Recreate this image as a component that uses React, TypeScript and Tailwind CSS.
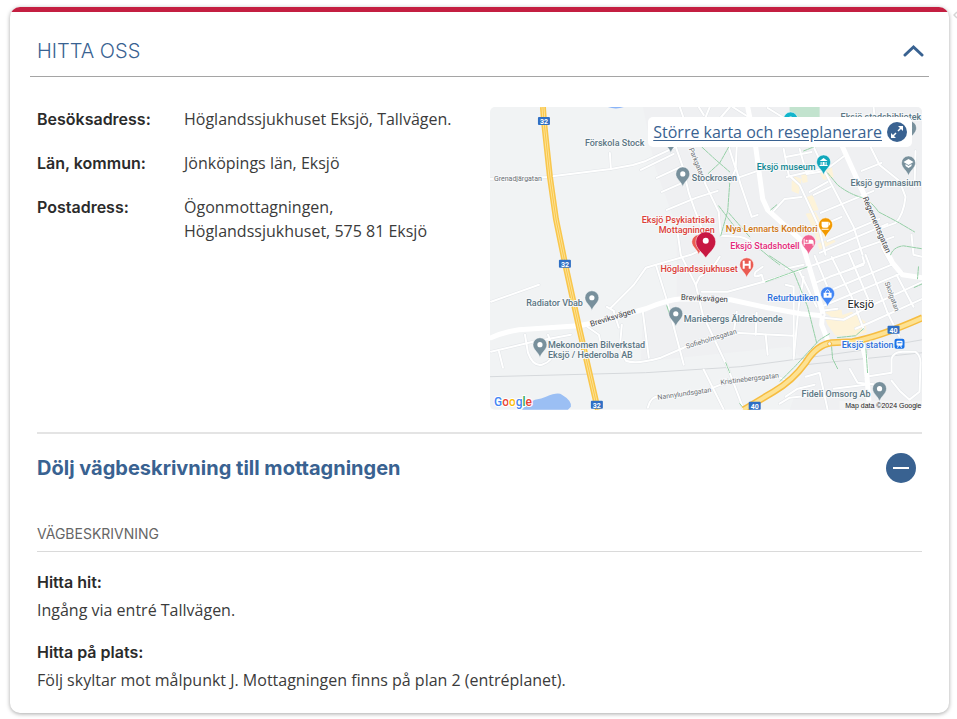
import { useState } from 'react';

type Point = [number, number];

const address = [
  { label: 'Besöksadress:', lines: ['Höglandssjukhuset Eksjö, Tallvägen.'] },
  { label: 'Län, kommun:', lines: ['Jönköpings län, Eksjö'] },
  { label: 'Postadress:', lines: ['Ögonmottagningen,', 'Höglandssjukhuset, 575 81 Eksjö'] },
];

const directions = [
  { title: 'Hitta hit:', text: 'Ingång via entré Tallvägen.' },
  {
    title: 'Hitta på plats:',
    text: 'Följ skyltar mot målpunkt J. Mottagningen finns på plan 2 (entréplanet).',
  },
];

const minorRoads = [
  'M0 72 L56 70 L121 62 L143 58 L156 54 L184 41 L196 30',
  'M120 46 L121 62',
  'M1 195 L49 178',
  'M1 245 L43 235 L81 228',
  'M9 245 L13 261',
  'M35 228 L38 246 Q43 260 52 258 Q63 255 64 243 L58 228',
  'M96 219 L109 228 L112 241',
  'M117 200 L124 204 M121 201 L144 178 L156 161 L166 158 L201 148 L214 142',
  'M124 205 L129 221 M132 218 L130 240 L136 254 Q146 258 171 251 L194 241 Q212 231 244 226 L304 229',
  'M153 205 L159 251',
  'M166 158 L176 190 L194 258',
  'M187 120 L191 148 L206 178 L213 208 L238 261 L254 303',
  'M206 178 L210 170 Q222 164 230 150 M212 185 L238 185 L274 175 L312 163',
  'M274 175 L272 168 Q262 172 266 165 L273 160',
  'M247 205 L244 226 M267 206 L266 228 M276 228 L278 248 M314 170 L309 200 L304 252',
  'M158 301 Q161 289 170 290 L211 286 L231 278 L260 272 L288 270 L297 274',
  'M214 263 L234 303',
  'M186 40 L193 60 L199 86 L205 103 L214 126',
  'M190 0 L199 26 L202 40 L216 78 L229 105 L231 129 L250 130 Q260 132 270 142',
  'M167 71 L191 60 M172 85 L195 75 M177 103 L206 91 L228 84 M151 63 L184 47',
  'M240 0 L228 14 L205 35 M243 0 L262 12 M209 0 L214 8',
  'M247 40 L246 60 L251 78 L262 110 L268 108',
  'M239 74 L268 64 M239 40 L246 62 L240 76 M220 0 L216 10 M278 1 L296 12',
  'M294 42 L299 68 L310 78 L329 119 L336 148',
  'M310 42 L317 67 L335 64 M324 40 L336 66 L364 120 L373 148',
  'M296 50 L322 45 M297 62 L318 58 M297 70 L340 60 L356 48',
  'M284 104 L295 92 L312 90 M320 85 L338 75 M324 88 L341 80',
  'M331 106 L384 84 M336 117 L352 110 M338 134 L390 112 M330 146 L398 117',
  'M319 160 L404 130 M326 176 L340 170 L374 158 M330 188 L404 157 M334 199 L413 166',
  'M309 163 L327 200 M325 149 L342 190 M342 150 L362 190 L374 222 M359 146 L382 200',
  'M376 148 L398 206 M392 140 L402 158 M359 163 L375 156 L373 150',
  'M296 178 L304 180 L304 249 M296 162 L314 158',
  'M334 211 L354 213 L377 201 L433 175 M332 204 L348 202',
  'M366 222 L380 216 L433 192 M407 168 L424 200 M398 206 L410 230',
  'M372 64 L392 56 M380 38 L390 58 L410 74 L416 90 Q414 108 406 116 L390 122',
  'M384 0 L388 38 M426 44 L425 80 M422 128 L424 148 L433 150',
  'M376 238 L380 303 M376 270 L402 266 L402 252 Q404 245 413 245 L426 245 Q431 249 431 256 L430 285 L420 293 L410 284 L402 274',
  'M316 270 L330 266 L338 303 M296 290 L308 282 L325 278 M290 297 L300 291 L319 289 M360 262 L368 276 L390 278 M344 282 L376 278',
];

const mainRoads = [
  'M1 231 Q15 225 29 223 L89 219 L109 215 L156 202 Q177 193 192 192 L241 193 L278 201 L311 207 L333 209',
  'M258 0 L266 40 L273 92 L278 103 L311 133 L316 148 L333 205 L332 218 L339 236',
  'M353 40 L376 91 L398 146 L403 156 L413 168 L433 171 M353 40 L344 20',
  'M372 235 L376 252 L380 303',
];

const greenPaths = [
  'M212 40 L225 52 L240 65 M239 40 L230 56 L218 67 M240 76 L238 104 L231 129 M229 99 L245 120 M239 106 L260 130',
  'M338 66 L348 78 Q358 86 370 90 Q380 92 389 105 L408 115 L425 125',
  'M401 148 Q404 140 414 139 L433 142',
  'M280 149 L304 165 L318 200 L327 236 M276 175 L304 165 L318 160 M177 199 L180 208 M236 256 L240 266 M250 297 L255 303',
  'M270 142 L282 152 L290 158 M314 44 L324 40 M281 103 L287 98',
  'M429 160 L428 172 M433 177 L424 181 M374 222 L366 229 L347 231 M376 237 L378 266 M342 240 L343 252 L348 262',
  'M340 227 L330 233 L306 259 L290 275',
];

const highway32 = 'M53 0 L54 14 L60 70 L66 112 L75 156 L89 220 L108 303';
const highway40 = 'M254 303 L284 285 Q303 274 316 256 Q327 238 342 236 L363 235 Q390 230 433 211';

// Labels standing left of their pin are anchored at the pin
const poiLabels = [
  { x: 95, y: 39, text: 'Förskola Stock', color: '#5b7683' },
  { x: 202, y: 74, text: 'Stockrosen', color: '#5b7683' },
  { x: 326, y: 63, text: 'Eksjö museum', color: '#0f8793', end: true },
  { x: 351, y: 13, text: 'Eksjö stadsbibliotek', color: '#5b7683' },
  { x: 361, y: 79, text: 'Eksjö gymnasium', color: '#5b7683' },
  { x: 225, y: 116, text: 'Eksjö Psykiatriska', color: '#dc4038', end: true },
  { x: 225, y: 126, text: 'Mottagningen', color: '#dc4038', end: true },
  { x: 328, y: 125, text: 'Nya Lennarts Konditori', color: '#cf7612', end: true },
  { x: 310, y: 142, text: 'Eksjö Stadshotell', color: '#e52a7b', end: true },
  { x: 248, y: 165, text: 'Höglandssjukhuset', color: '#dc4038', end: true },
  { x: 329, y: 194, text: 'Returbutiken', color: '#2d70dc', end: true },
  { x: 93, y: 199, text: 'Radiator Vbab', color: '#5b7683', end: true },
  { x: 194, y: 215, text: 'Mariebergs Äldreboende', color: '#5b7683' },
  { x: 58, y: 241, text: 'Mekonomen Bilverkstad', color: '#5b7683' },
  { x: 58, y: 251, text: 'Eksjö / Hederolba AB', color: '#5b7683' },
  { x: 404, y: 241, text: 'Eksjö station', color: '#2d70dc', end: true },
  { x: 381, y: 290, text: 'Fideli Omsorg Ab', color: '#5b7683', end: true },
];

const streetLabels = [
  { at: 'translate(4 74)', text: 'Grenadjärgatan', size: 7 },
  { at: 'translate(101 220) rotate(-17)', text: 'Breviksvägen', size: 8 },
  { at: 'translate(191 193) rotate(3)', text: 'Breviksvägen', size: 8 },
  { at: 'translate(197 242) rotate(-17)', text: 'Sofieholmsgatan', size: 7 },
  { at: 'translate(231 278) rotate(-7)', text: 'Kristinebergsgatan', size: 7 },
  { at: 'translate(168 293) rotate(-8)', text: 'Nannylundsgatan', size: 7 },
  { at: 'translate(199 42) rotate(68)', text: 'Parkgatan', size: 7 },
  { at: 'translate(373 91) rotate(67)', text: 'Regementsgatan', size: 8 },
  { at: 'translate(395 176) rotate(70)', text: 'Skolgatan', size: 7 },
];

const roadSigns: { at: Point; text: string }[] = [
  { at: [54, 14], text: '32' },
  { at: [75, 157], text: '32' },
  { at: [107, 298], text: '32' },
  { at: [265, 299], text: '40' },
  { at: [404, 223], text: '40' },
];

const greyPins: Point[] = [
  [193, 80],
  [102, 204],
  [50, 251],
  [186, 220],
  [390, 295],
  [419, 69],
  [181, 46],
  [420, 34],
];

function Pin({ at, color, children }: { at: Point; color: string; children?: React.ReactNode }) {
  return (
    <g transform={`translate(${at[0]} ${at[1]})`}>
      <path d="M0 0 C-1 -5 -7 -8 -7 -13 A7 7 0 0 1 7 -13 C7 -8 1 -5 0 0Z" fill={color} stroke="#fff" strokeWidth="0.5" />
      {children ?? <circle cy="-13" r="2.6" fill="#fff" />}
    </g>
  );
}

function TownMap() {
  return (
    <svg viewBox="0 0 433 303" className="block w-full" role="img" aria-label="Karta över Eksjö">
      <rect width="433" height="303" fill="#f1f3f4" />
      <path d="M153 0 H433 V303 H300 L316 256 L300 240 L151 255 L153 205 L187 192 L187 120 L165 60Z" fill="#eff0f2" />

      {/* Water, park and built-up areas */}
      <path d="M32 303 Q38 296 45 293 Q52 292 56 290 Q68 285 72 288 Q82 294 81 300 L78 303Z" fill="#9bbff4" />
      <path d="M118 0 H134 Q126 3 118 0Z" fill="#8ab4f8" />
      <path d="M300 0 H330 V16 H300Z" fill="#c2e3ce" />
      <g fill="#fdf3d9">
        <path d="M336 213 L345 211 L362 205 L376 215 L377 226 L368 229 L346 229 L338 218Z" />
        <path d="M337 200 L340 204 L352 203 L353 209 L344 212 L336 206Z" />
        <path d="M302 75 L305 69 L312 72 L309 87 L302 84Z" />
        <path d="M311 66 L317 64 L318 75 L313 76Z" />
        <path d="M317 90 L323 88 L329 103 L320 105Z" />
        <path d="M316 107 L326 105 L333 118 L323 121Z" />
        <path d="M324 122 L334 120 L335 131 L327 134Z" />
        <path d="M328 137 L343 131 L346 135 L330 143Z" />
        <path d="M330 66 L342 60 L344 70 L334 73Z" />
      </g>

      <g fill="none" strokeLinejoin="round" strokeLinecap="round">
        <path d="M0 270 L156 266 L251 260 L311 252 L369 244 L433 233 M316 258 L433 246" stroke="#d6d9dc" strokeWidth="1" />
        {minorRoads.map((d) => (
          <path key={d} d={d} stroke="#e2e5e8" strokeWidth="3" />
        ))}
        {minorRoads.map((d) => (
          <path key={d} d={d} stroke="#fff" strokeWidth="2" />
        ))}
        {mainRoads.map((d) => (
          <path key={d} d={d} stroke="#fff" strokeWidth="5" />
        ))}
        {greenPaths.map((d) => (
          <path key={d} d={d} stroke="#95cfa6" strokeWidth="1" strokeDasharray="4 1" />
        ))}
        <path d={highway40} stroke="#f6bd42" strokeWidth="7" strokeLinecap="butt" />
        <path d={highway40} stroke="#fde293" strokeWidth="4" strokeLinecap="butt" />
        <path d={highway32} stroke="#f9c64b" strokeWidth="6" strokeLinecap="butt" />
        <path d={highway32} stroke="#fde293" strokeWidth="3" strokeLinecap="butt" />
        <path d={highway32} stroke="#f9c64b" strokeWidth="1" strokeLinecap="butt" />
        <circle cx="340" cy="237" r="2" fill="#f1f3f4" stroke="#f6bd42" />
        <circle cx="333" cy="208" r="2" fill="#eceef0" stroke="#fff" strokeWidth="2" />
      </g>

      {roadSigns.map(({ at, text }) => (
        <g key={`${at[0]}-${at[1]}`}>
          <rect x={at[0] - 6} y={at[1] - 4} width="12" height="8" rx="1" fill="#2f6fc4" />
          <text x={at[0]} y={at[1] + 3} textAnchor="middle" fontSize="7" fontWeight="700" fill="#fff">
            {text}
          </text>
        </g>
      ))}

      {streetLabels.map((s) => (
        <text
          key={s.at}
          transform={s.at}
          fontSize={s.size}
          fill={s.size === 8 ? '#3c4043' : '#6b7074'}
          stroke="#f8f9fa"
          strokeWidth="2"
          paintOrder="stroke"
        >
          {s.text}
        </text>
      ))}
      {poiLabels.map((p) => (
        <text
          key={p.text}
          x={p.x}
          y={p.y}
          textAnchor={p.end ? 'end' : 'start'}
          fontSize="9"
          fontWeight="500"
          fill={p.color}
          stroke="#f8f9fa"
          strokeWidth="2"
          paintOrder="stroke"
        >
          {p.text}
        </text>
      ))}
      <text x="358" y="201" fontSize="11" fill="#202124" stroke="#fff" strokeWidth="2" paintOrder="stroke">
        Eksjö
      </text>

      {greyPins.map((at) => (
        <Pin key={`${at[0]}-${at[1]}`} at={at} color="#78909c">
          {at[0] === 419 ? (
            <path d="M-5 -14 L0 -17 L5 -14 L0 -11Z M-3 -12 L0 -10 L3 -12 V-10 L0 -8 L-3 -10Z" fill="#fff" />
          ) : undefined}
        </Pin>
      ))}
      <Pin at={[301, 25]} color="#12b5cb" />
      <Pin at={[334, 68]} color="#12a7bb">
        <path d="M-4 -14 L0 -17 L4 -14Z M-3 -13 H-2 V-10 H-3Z M-1 -13 H1 V-10 H-1Z M2 -13 H3 V-10 H2Z M-4 -10 H4 V-9 H-4Z" fill="#fff" />
      </Pin>
      <Pin at={[336, 131]} color="#f29900">
        <path d="M-4 -16 H3 V-12 Q3 -10 1 -10 H-2 Q-4 -10 -4 -12Z M-4 -9 H3 V-8 H-4Z" fill="#fff" />
        <path d="M3 -15 H4 V-13 H3" fill="none" stroke="#fff" />
      </Pin>
      <Pin at={[319, 148]} color="#f06292">
        <path d="M-5 -16 H-4 V-12 H0 V-15 H3 Q5 -15 5 -13 V-9 H4 V-11 H-4 V-9 H-5Z" fill="#fff" />
        <circle cx="-2" cy="-14" r="1" fill="#fff" />
      </Pin>
      <Pin at={[257, 171]} color="#ea5b52">
        <path d="M-3 -17 V-9 M3 -17 V-9 M-3 -13 H3" stroke="#fff" strokeWidth="2" />
      </Pin>
      <Pin at={[338, 200]} color="#4285f4">
        <path d="M-4 -14 H4 V-9 H-4Z" fill="#fff" />
        <path d="M-2 -14 V-15 Q0 -19 2 -15 V-14" fill="none" stroke="#fff" />
        <circle cy="-12" r="1" fill="#4285f4" />
      </Pin>
      <g>
        <rect x="405" y="232" width="10" height="10" rx="2" fill="#1a73e8" />
        <rect x="407" y="234" width="6" height="5" rx="1" fill="#fff" />
        <path d="M408 236 H412" stroke="#1a73e8" />
        <path d="M408 241 L409 239 M412 241 L411 239" stroke="#fff" />
      </g>

      {/* Clinic marker, partly covering the hospital pin behind it */}
      <Pin at={[209, 148]} color="#ea5b52" />
      <path d="M216 151 C213 146 206 142 206 135 A10 10 0 0 1 226 135 C226 142 219 146 216 151Z" fill="#c81842" stroke="#fff" strokeWidth="0.5" />
      <circle cx="216" cy="134" r="3" fill="#fff" />

      <text x="4" y="299" fontSize="12" fontWeight="500" stroke="#fff" strokeWidth="2" paintOrder="stroke">
        <tspan fill="#4285f4">G</tspan>
        <tspan fill="#ea4335">o</tspan>
        <tspan fill="#fbbc04">o</tspan>
        <tspan fill="#4285f4">g</tspan>
        <tspan fill="#34a853">l</tspan>
        <tspan fill="#ea4335">e</tspan>
      </text>
      <rect x="350" y="294" width="83" height="9" fill="#f5f5f5" opacity="0.8" />
      <text x="432" y="301" textAnchor="end" fontSize="7" fill="#222" className="font-['Liberation_Sans',sans-serif]">
        Map data ©2024 Google
      </text>
    </svg>
  );
}

export default function App() {
  const [open, setOpen] = useState(true);
  const [showDirections, setShowDirections] = useState(true);

  return (
    <div className="flex items-start bg-white pt-[7px] pb-1.5 pl-[10px] font-['Open_Sans',sans-serif] text-base leading-6 text-[#3b3b3b]">
      <section className="min-w-0 flex-1 overflow-hidden rounded-[10px] bg-white shadow-[0_1px_4px_rgba(0,0,0,0.35)]">
        <div className="h-[5px] bg-[#c41f41]" />
        <h2 className="mx-5 border-b border-[#a5a5a5]">
          <button
            type="button"
            aria-expanded={open}
            onClick={() => setOpen(!open)}
            className="flex h-16 w-full items-center justify-between pt-3.5 pr-[5px] pb-0 pl-[7px] text-left"
          >
            <span className="font-['Inter',sans-serif] text-xl font-light text-[#396291]">HITTA OSS</span>
            <svg
              viewBox="0 0 21 14"
              className={`h-3.5 w-[21px] ${open ? '' : 'rotate-180'}`}
              fill="none"
              stroke="#396291"
              strokeWidth="3"
              strokeLinecap="round"
              aria-hidden="true"
            >
              <path d="M2 11 L10.5 3 L19 11" />
            </svg>
          </button>
        </h2>

        {open && (
          <div className="px-[27px] pt-[30px] pb-[19px]">
            <div className="grid grid-cols-2 gap-5">
              <dl className="flex flex-col gap-5">
                {address.map((row) => (
                  <div key={row.label} className="flex">
                    <dt className="w-[147px] shrink-0 font-['Inter',sans-serif] font-semibold text-[#2b2b2b]">{row.label}</dt>
                    <dd>
                      {row.lines.map((line) => (
                        <span key={line} className="block">
                          {line}
                        </span>
                      ))}
                    </dd>
                  </div>
                ))}
              </dl>

              <div className="relative self-start overflow-hidden rounded-[5px] font-['Roboto',sans-serif]">
                <TownMap />
                <a
                  href="#karta"
                  className="absolute top-2.5 right-2.5 flex h-[30px] items-center gap-[5px] rounded-[5px] bg-white px-[5px] font-['Open_Sans',sans-serif] text-[#396291]"
                >
                  <span className="underline underline-offset-2">Större karta och reseplanerare</span>
                  <svg viewBox="0 0 20 20" className="h-5 w-5" aria-hidden="true">
                    <circle cx="10" cy="10" r="10" fill="#396291" />
                    <path d="M11 9 L15 5 M9 11 L5 15" stroke="#fff" strokeWidth="1.5" />
                    <path d="M11 4 H16 V9Z M4 11 V16 H9Z" fill="#fff" />
                  </svg>
                </a>
              </div>
            </div>

            <h3 className="mt-[22px] border-t-2 border-[#e4e4e4]">
              <button
                type="button"
                aria-expanded={showDirections}
                onClick={() => setShowDirections(!showDirections)}
                className="flex h-[68px] w-full items-center justify-between pr-1.5 text-left"
              >
                <span className="font-['Inter',sans-serif] text-xl font-bold text-[#396291]">
                  Dölj vägbeskrivning till mottagningen
                </span>
                <svg viewBox="0 0 30 30" className="h-[30px] w-[30px]" aria-hidden="true">
                  <circle cx="15" cy="15" r="15" fill="#396291" />
                  <path d="M7 15 H23" stroke="#fff" strokeWidth="2" />
                </svg>
              </button>
            </h3>

            {showDirections && (
              <div className="pt-5">
                <h4 className="mb-4 border-b border-[#dadada] pb-[5px] font-['Inter',sans-serif] text-sm leading-6 text-[#666]">
                  VÄGBESKRIVNING
                </h4>
                <div className="flex flex-col gap-3.5 leading-7">
                  {directions.map((d) => (
                    <div key={d.title}>
                      <h5 className="font-['Inter',sans-serif] font-semibold text-[#2b2b2b]">{d.title}</h5>
                      <p>{d.text}</p>
                    </div>
                  ))}
                </div>
              </div>
            )}
          </div>
        )}
      </section>

      {/* Edge handle beside the card */}
      <div className="w-2 shrink-0 overflow-hidden pt-1 pl-1">
        <svg viewBox="0 0 4 8" className="h-2 w-1" aria-hidden="true">
          <path d="M4 1 L1 4 L4 7" fill="none" stroke="#d5d5d5" strokeWidth="1.5" />
        </svg>
      </div>
    </div>
  );
}
